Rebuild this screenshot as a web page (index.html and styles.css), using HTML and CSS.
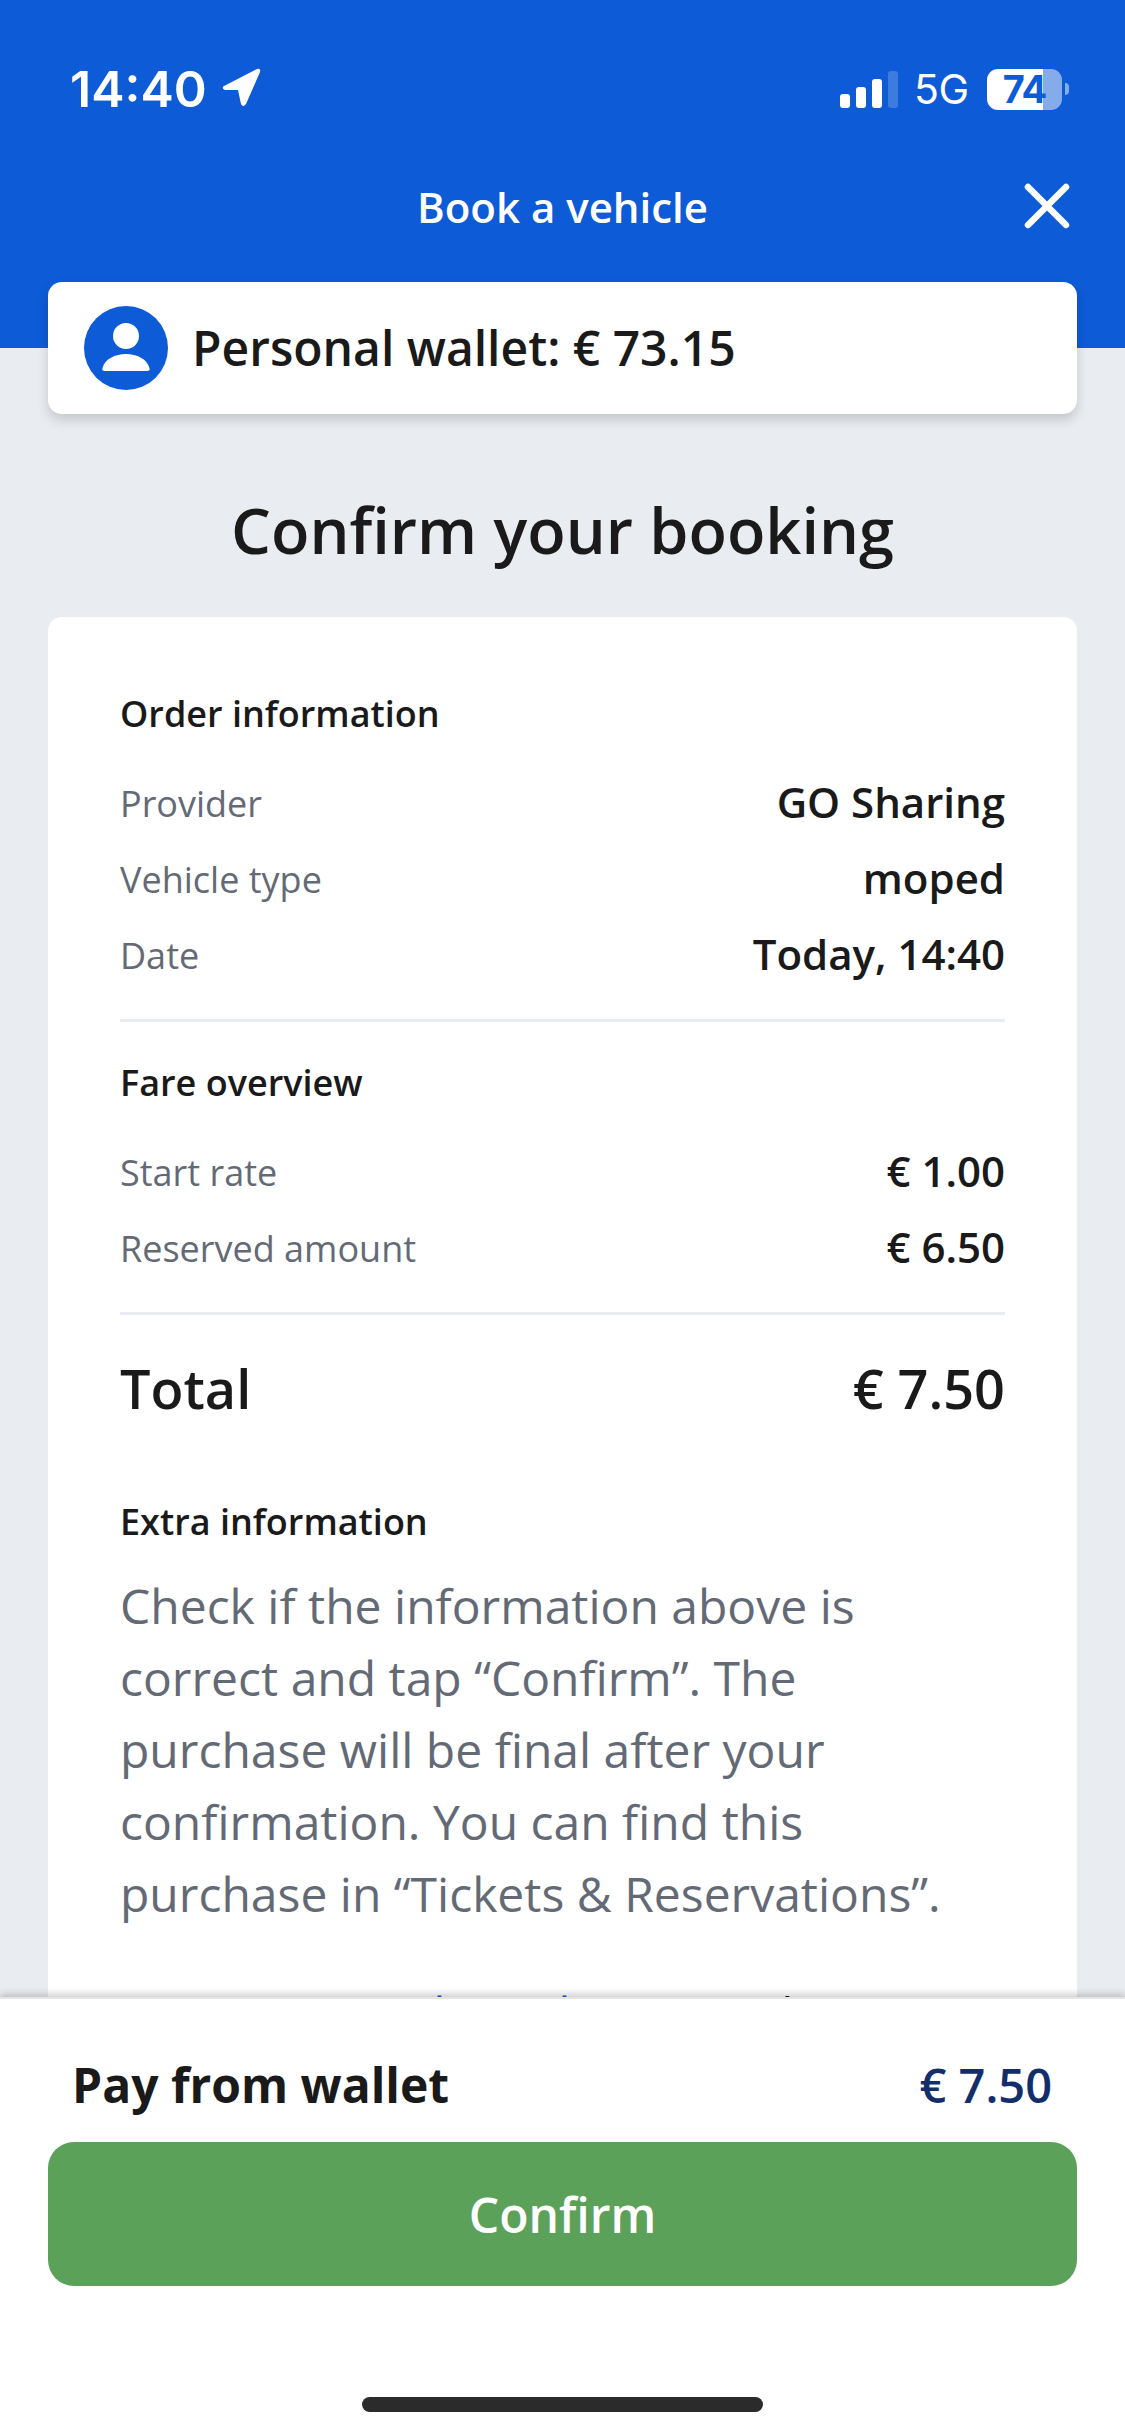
FILE: index.html
```html
<!DOCTYPE html>
<html lang="en">
<head>
<meta charset="utf-8">
<title>Book a vehicle</title>
<link rel="stylesheet" href="styles.css">
</head>
<body>
<div class="screen">
  <header class="top">
    <div class="status">
      <div class="status-left">
        <span class="clock">14:40</span>
        <svg class="loc" viewBox="0 0 40 40"><path d="M3 19 L36 2 Q40 1 39 5 L25 37 Q22 41 20 37 L17 23 L4 23 Q0 21 3 19 Z" fill="#fff"/></svg>
      </div>
      <div class="status-right">
        <div class="signal"><i class="b1"></i><i class="b2"></i><i class="b3"></i><i class="b4"></i></div>
        <span class="net">5G</span>
        <div class="battery"><div class="battery-body"><span class="battery-num">74</span></div><div class="battery-tip"></div></div>
      </div>
    </div>
    <div class="nav">
      <span class="nav-title">Book a vehicle</span>
      <svg class="close" viewBox="0 0 46 46"><path d="M4 4 L42 42 M42 4 L4 42" stroke="#fff" stroke-width="6.5" stroke-linecap="round" fill="none"/></svg>
    </div>
  </header>
  <main class="content">
    <div class="wallet">
      <svg class="avatar" viewBox="0 0 84 84"><circle cx="42" cy="42" r="42" fill="#0d5bd7"/><circle cx="42" cy="30" r="13" fill="#fff"/><path d="M21 65 Q17.5 65 18.5 62 C21 53 31 48 42 48 C53 48 63 53 65.5 62 Q66.5 65 63 65 Z" fill="#fff"/></svg>
      <span class="wallet-text">Personal wallet: € 73.15</span>
    </div>
    <h1 class="title">Confirm your booking</h1>
    <section class="card">
      <h2 class="sub">Order information</h2>
      <div class="row first"><span class="lbl">Provider</span><span class="val">GO Sharing</span></div>
      <div class="row"><span class="lbl">Vehicle type</span><span class="val">moped</span></div>
      <div class="row"><span class="lbl">Date</span><span class="val">Today, 14:40</span></div>
      <hr class="rule">
      <h2 class="sub">Fare overview</h2>
      <div class="row first"><span class="lbl">Start rate</span><span class="val">€ 1.00</span></div>
      <div class="row"><span class="lbl">Reserved amount</span><span class="val">€ 6.50</span></div>
      <hr class="rule">
      <div class="total"><span>Total</span><span>€ 7.50</span></div>
      <h2 class="sub extra">Extra information</h2>
      <p class="info">Check if the information above is correct and tap “Confirm”. The purchase will be final after your confirmation. You can find this purchase in “Tickets &amp; Reservations”.</p>
      <p class="terms"><span class="terms-link">Terms and Conditions</span> apply</p>
    </section>
  </main>
  <footer class="foot">
    <div class="pay"><span class="pay-lbl">Pay from wallet</span><span class="pay-val">€ 7.50</span></div>
    <button class="confirm">Confirm</button>
    <div class="home"></div>
  </footer>
</div>
</body>
</html>
```
FILE: styles.css
```css
* { box-sizing: border-box; }
html, body { margin: 0; padding: 0; }
body { width: 1125px; height: 2436px; overflow: hidden; background: #e9edf2; font-family: "Open Sans", sans-serif; color: #1a1a1a; }
.screen { width: 1125px; height: 2436px; position: relative; overflow: hidden; display: flex; flex-direction: column; }
.top { height: 348px; background: #0d5bd7; color: #fff; flex: none; padding: 65px 48px 0; }
.status { display: flex; justify-content: space-between; align-items: center; height: 48px; padding-left: 22px; }
.status-left { display: flex; align-items: center; gap: 14px; }
.clock { font-family: Inter, sans-serif; font-weight: 600; font-size: 50px; line-height: 48px; }
.loc { width: 40px; height: 40px; margin-top: -4px; }
.status-right { display: flex; align-items: center; gap: 18px; padding-right: 8px; }
.signal { display: flex; align-items: flex-end; gap: 6px; height: 37px; }
.signal i { display: block; width: 10px; background: #fff; border-radius: 3px; }
.signal .b1 { height: 14px; }
.signal .b2 { height: 21px; }
.signal .b3 { height: 29px; }
.signal .b4 { height: 37px; background: rgba(255,255,255,.2); }
.net { font-family: Inter, sans-serif; font-size: 41px; line-height: 48px; width: 52px; white-space: nowrap; margin-left: -2px; margin-right: 2px; letter-spacing: -.5px; }
.battery { display: flex; align-items: center; gap: 3px; margin-left: 1px; }
.battery-body { width: 75px; height: 41px; border-radius: 11px; background: linear-gradient(90deg, #fff 0 74.5%, #85abeb 74.5%); display: flex; align-items: center; justify-content: center; }
.battery-num { font-family: Inter, sans-serif; font-weight: 700; font-size: 38px; letter-spacing: -1px; color: #0d5bd7; line-height: 41px; }
.battery-tip { width: 4px; height: 12px; border-radius: 0 6px 6px 0; background: #85abeb; }
.nav { position: relative; display: flex; justify-content: center; align-items: center; height: 64px; margin-top: 61px; }
.nav-title { font-size: 42px; font-weight: 600; }
.close { position: absolute; right: 7px; top: 9px; width: 46px; height: 46px; }
.content { flex: 1; padding: 0 48px; margin-top: -66px; position: relative; }
.wallet { height: 132px; background: #fff; border-radius: 14px; display: flex; align-items: center; padding-left: 36px; gap: 24px; box-shadow: 0 6px 12px rgba(0,0,0,.16); }
.avatar { width: 84px; height: 84px; flex: none; }
.wallet-text { font-size: 48px; font-weight: 600; margin-top: -2px; }
.title { margin: 71px 0 0; font-size: 63px; line-height: 90px; font-weight: 600; text-align: center; }
.card { margin-top: 42px; background: #fff; border-radius: 14px; padding: 72px 72px 0; height: 1500px; }
.sub { margin: 0; font-size: 36px; line-height: 50px; font-weight: 600; }
.row { display: flex; justify-content: space-between; align-items: center; height: 76px; }
.row.first { margin-top: 26px; }
.lbl { font-size: 36px; color: #646a75; }
.val { font-size: 42px; font-weight: 600; margin-top: -4px; }
.rule { border: 0; height: 3px; background: #e9edf2; margin: 26px 0 36px; }
.total { display: flex; justify-content: space-between; font-size: 54px; font-weight: 600; line-height: 72px; margin-top: 37px; }
.extra { margin-top: 73px; }
.info { margin: 23px 0 0; font-size: 48px; line-height: 72px; color: #646a75; }
.terms { margin: 53px 0 0; padding-right: 92px; font-size: 46px; line-height: 60px; text-align: center; white-space: nowrap; color: #1a1a1a; }
.terms-link { color: #0d5bd7; }
.foot { position: absolute; left: 0; right: 0; top: 1997px; height: 439px; background: #fff; box-shadow: 0 -3px 7px rgba(0,0,0,.2); border-top: 2px solid #e5e5e5; padding: 54px 48px 0; }
.pay { display: flex; justify-content: space-between; padding: 0 25px 0 24px; line-height: 64px; }
.pay-lbl { font-size: 48px; font-weight: 700; }
.pay-val { font-size: 47px; font-weight: 600; color: #142d6b; }
.confirm { display: block; width: 100%; height: 144px; margin-top: 25px; border: 0; border-radius: 26px; background: #5ca15a; color: #fff; font-family: inherit; font-size: 48px; font-weight: 600; padding: 0; }
.home { width: 401px; height: 15px; margin: 111px auto 0; border-radius: 8px; background: #2b2b2b; }
```
